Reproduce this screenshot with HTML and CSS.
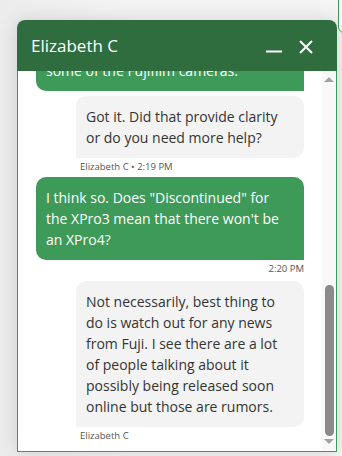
FILE: index.html
```html
<!DOCTYPE html>
<html lang="en">
<head>
  <meta charset="UTF-8">
  <meta name="viewport" content="width=device-width, initial-scale=1.0">
  <title>Chat</title>
  <link rel="stylesheet" href="styles.css">
</head>
<body>
  <div class="back-tab"></div>
  <div class="chat-window">
    <div class="chat-header">
      <span class="chat-title">Elizabeth C</span>
      <div class="chat-actions">
        <svg class="icon" width="18" height="18" viewBox="0 0 18 18"><path d="M1 13.5h16" stroke="#fff" stroke-width="2" fill="none"/></svg>
        <svg class="icon" width="18" height="18" viewBox="0 0 18 18"><path d="M3 3l12 12M15 3L3 15" stroke="#fff" stroke-width="2" fill="none"/></svg>
      </div>
    </div>
    <div class="chat-body">
      <div class="messages">
        <div class="msg user">
          <div class="bubble">It's on the list along with<br>some of the Fujifilm cameras.</div>
        </div>
        <div class="msg agent">
          <div class="bubble">Got it. Did that provide clarity or do you need more help?</div>
          <div class="meta">Elizabeth C &bull; 2:19 PM</div>
        </div>
        <div class="msg user">
          <div class="bubble">I think so. Does "Discontinued" for the XPro3 mean that there won't be an XPro4?</div>
          <div class="meta">2:20 PM</div>
        </div>
        <div class="msg agent">
          <div class="bubble">Not necessarily, best thing to do is watch out for any news from Fuji. I see there are a lot of people talking about it possibly being released soon online but those are rumors.</div>
          <div class="meta">Elizabeth C</div>
        </div>
      </div>
      <div class="scrollbar">
        <div class="arrow up"></div>
        <div class="track"><div class="thumb"></div></div>
        <div class="arrow down"></div>
      </div>
    </div>
  </div>
</body>
</html>
```

FILE: styles.css
```css
* { box-sizing: border-box; }
html, body {
  margin: 0;
  padding: 0;
  height: 100%;
  overflow: hidden;
  font-family: 'Open Sans', 'Noto Sans', sans-serif;
  background: linear-gradient(90deg, #ececec, #f4f4f4 40%, #f4f4f4);
}

body {
  padding: 20px 0 0 17px;
}

.back-tab {
  position: absolute;
  top: -10px;
  left: 338px;
  width: 40px;
  height: 43px;
  border: 1px solid #3d9a58;
  border-radius: 6px;
  background: #f7f7f7;
}

.chat-window {
  width: 320px;
  height: 432px;
  display: flex;
  flex-direction: column;
  border-radius: 8px 8px 0 0;
  background: #fff;
  box-shadow: 0 0 18px rgba(0, 0, 0, 0.14);
}

.chat-header {
  height: 51px;
  flex-shrink: 0;
  display: flex;
  align-items: center;
  justify-content: space-between;
  padding: 0 22px 0 14px;
  background: #2f6d3f;
  border-radius: 8px 8px 0 0;
}

.chat-title {
  color: #fff;
  font-size: 17px;
}

.chat-actions {
  display: flex;
  gap: 14px;
  margin-top: 2px;
}

.chat-body {
  flex: 1;
  min-height: 0;
  display: flex;
  border: 1px solid #3d9a58;
  border-top: none;
}

.messages {
  flex: 1;
  min-width: 0;
  overflow: hidden;
  display: flex;
  flex-direction: column;
  justify-content: flex-end;
  padding: 0 18px 8px 18px;
}

.msg {
  display: flex;
  flex-direction: column;
  flex-shrink: 0;
  margin-top: 7px;
}

.msg.agent {
  padding-left: 40px;
}

.bubble {
  font-size: 14px;
  line-height: 21px;
  padding: 10px 13px 10px 10px;
  border-radius: 10px;
}

.user .bubble {
  background: #3d9a58;
  color: #fff;
  border-bottom-right-radius: 0;
}

.agent .bubble {
  background: #f3f3f3;
  color: #333;
  border-bottom-left-radius: 0;
}

.meta {
  font-size: 9.5px;
  line-height: 14px;
  margin-top: 2px;
  color: #555;
}

.agent .meta {
  padding-left: 4px;
}

.user .meta {
  text-align: right;
}

.msg.agent + .msg.user {
  margin-top: 3px;
}

.msg.user + .msg.agent {
  margin-top: 5px;
}

.scrollbar {
  width: 14px;
  flex-shrink: 0;
  display: flex;
  flex-direction: column;
  align-items: center;
  background: #f8f8f8;
}

.arrow {
  width: 0;
  height: 0;
  border-left: 5px solid transparent;
  border-right: 5px solid transparent;
}

.arrow.up {
  margin-top: 6px;
  border-bottom: 5px solid #a3a3a3;
}

.arrow.down {
  margin: 3px 0 7px;
  border-top: 5px solid #a3a3a3;
}

.track {
  flex: 1;
  width: 100%;
  display: flex;
  flex-direction: column;
  justify-content: flex-end;
  align-items: center;
}

.thumb {
  width: 9px;
  height: 151px;
  border-radius: 5px;
  background: #8a8a8a;
}
```
